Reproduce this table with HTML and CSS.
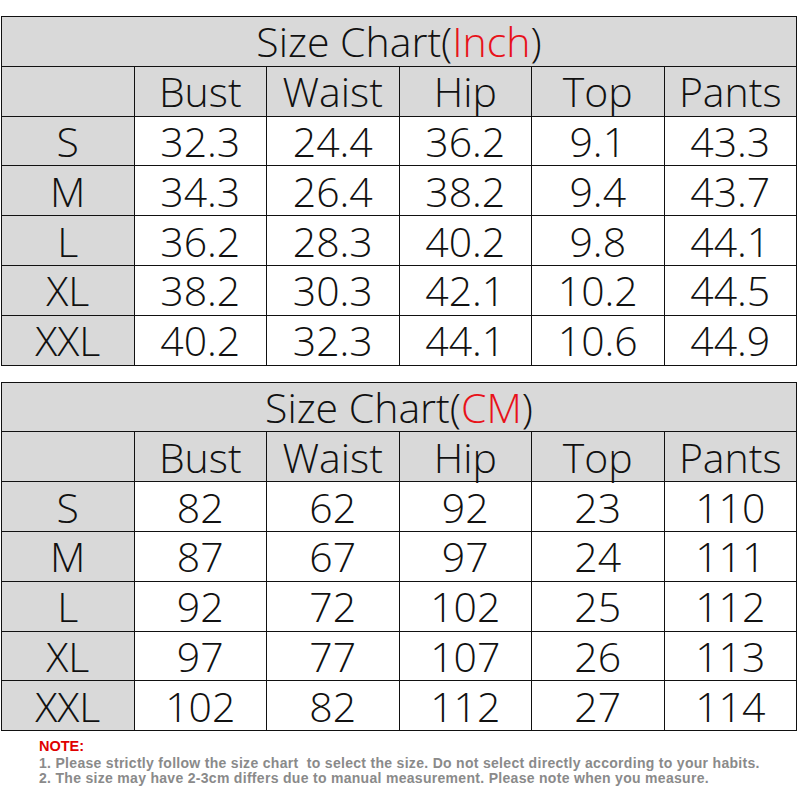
FILE: index.html
```html
<!DOCTYPE html>
<html>
<head>
<meta charset="utf-8">
<link rel="stylesheet" href="styles.css">
</head>
<body>
<div class="page">
  <table class="chart">
    <tr><td class="title" colspan="6">Size Chart(<span class="red">Inch</span>)</td></tr>
    <tr class="head"><td></td><td>Bust</td><td>Waist</td><td>Hip</td><td>Top</td><td>Pants</td></tr>
    <tr><td class="size">S</td><td>32.3</td><td>24.4</td><td>36.2</td><td>9.1</td><td>43.3</td></tr>
    <tr><td class="size">M</td><td>34.3</td><td>26.4</td><td>38.2</td><td>9.4</td><td>43.7</td></tr>
    <tr><td class="size">L</td><td>36.2</td><td>28.3</td><td>40.2</td><td>9.8</td><td>44.1</td></tr>
    <tr><td class="size">XL</td><td>38.2</td><td>30.3</td><td>42.1</td><td>10.2</td><td>44.5</td></tr>
    <tr><td class="size">XXL</td><td>40.2</td><td>32.3</td><td>44.1</td><td>10.6</td><td>44.9</td></tr>
  </table>
  <table class="chart second">
    <tr><td class="title" colspan="6">Size Chart(<span class="red">CM</span>)</td></tr>
    <tr class="head"><td></td><td>Bust</td><td>Waist</td><td>Hip</td><td>Top</td><td>Pants</td></tr>
    <tr><td class="size">S</td><td>82</td><td>62</td><td>92</td><td>23</td><td>110</td></tr>
    <tr><td class="size">M</td><td>87</td><td>67</td><td>97</td><td>24</td><td>111</td></tr>
    <tr><td class="size">L</td><td>92</td><td>72</td><td>102</td><td>25</td><td>112</td></tr>
    <tr><td class="size">XL</td><td>97</td><td>77</td><td>107</td><td>26</td><td>113</td></tr>
    <tr><td class="size">XXL</td><td>102</td><td>82</td><td>112</td><td>27</td><td>114</td></tr>
  </table>
  <div class="notes">
    <div class="note-title">NOTE:</div>
    <div>1. Please strictly follow the size chart&nbsp; to select the size. Do not select directly according to your habits.</div>
    <div>2. The size may have 2-3cm differs due to manual measurement. Please note when you measure.</div>
  </div>
</div>
</body>
</html>
```
FILE: styles.css
```css
html, body {
  margin: 0;
  padding: 0;
  background: #ffffff;
}
.page {
  width: 800px;
  padding-top: 16px;
}
.chart {
  margin-left: 1px;
  width: 796px;
  border-collapse: collapse;
  table-layout: fixed;
  font-family: "Open Sans", "Noto Sans", sans-serif;
  font-weight: 300;
  font-size: 41px;
  color: #111;
}
.chart td {
  border: 1.5px solid #111;
  height: 48.8px;
  padding: 0;
  text-align: center;
  vertical-align: middle;
  line-height: 40px;
  background: #ffffff;
}
.chart td.title,
.chart .head td,
.chart td.size {
  background: #d9d9d9;
}
.second {
  margin-top: 16px;
}
.red {
  color: #e8121a;
}
.notes {
  margin-top: 7px;
  padding-left: 39px;
  font-family: "Liberation Sans", Arial, sans-serif;
  font-weight: bold;
  font-size: 14px;
  letter-spacing: 0.3px;
  line-height: 15.5px;
  color: #8a8a8a;
}
.note-title {
  color: #e00000;
  font-size: 14.5px;
  line-height: 17.5px;
  letter-spacing: 0;
}
```
